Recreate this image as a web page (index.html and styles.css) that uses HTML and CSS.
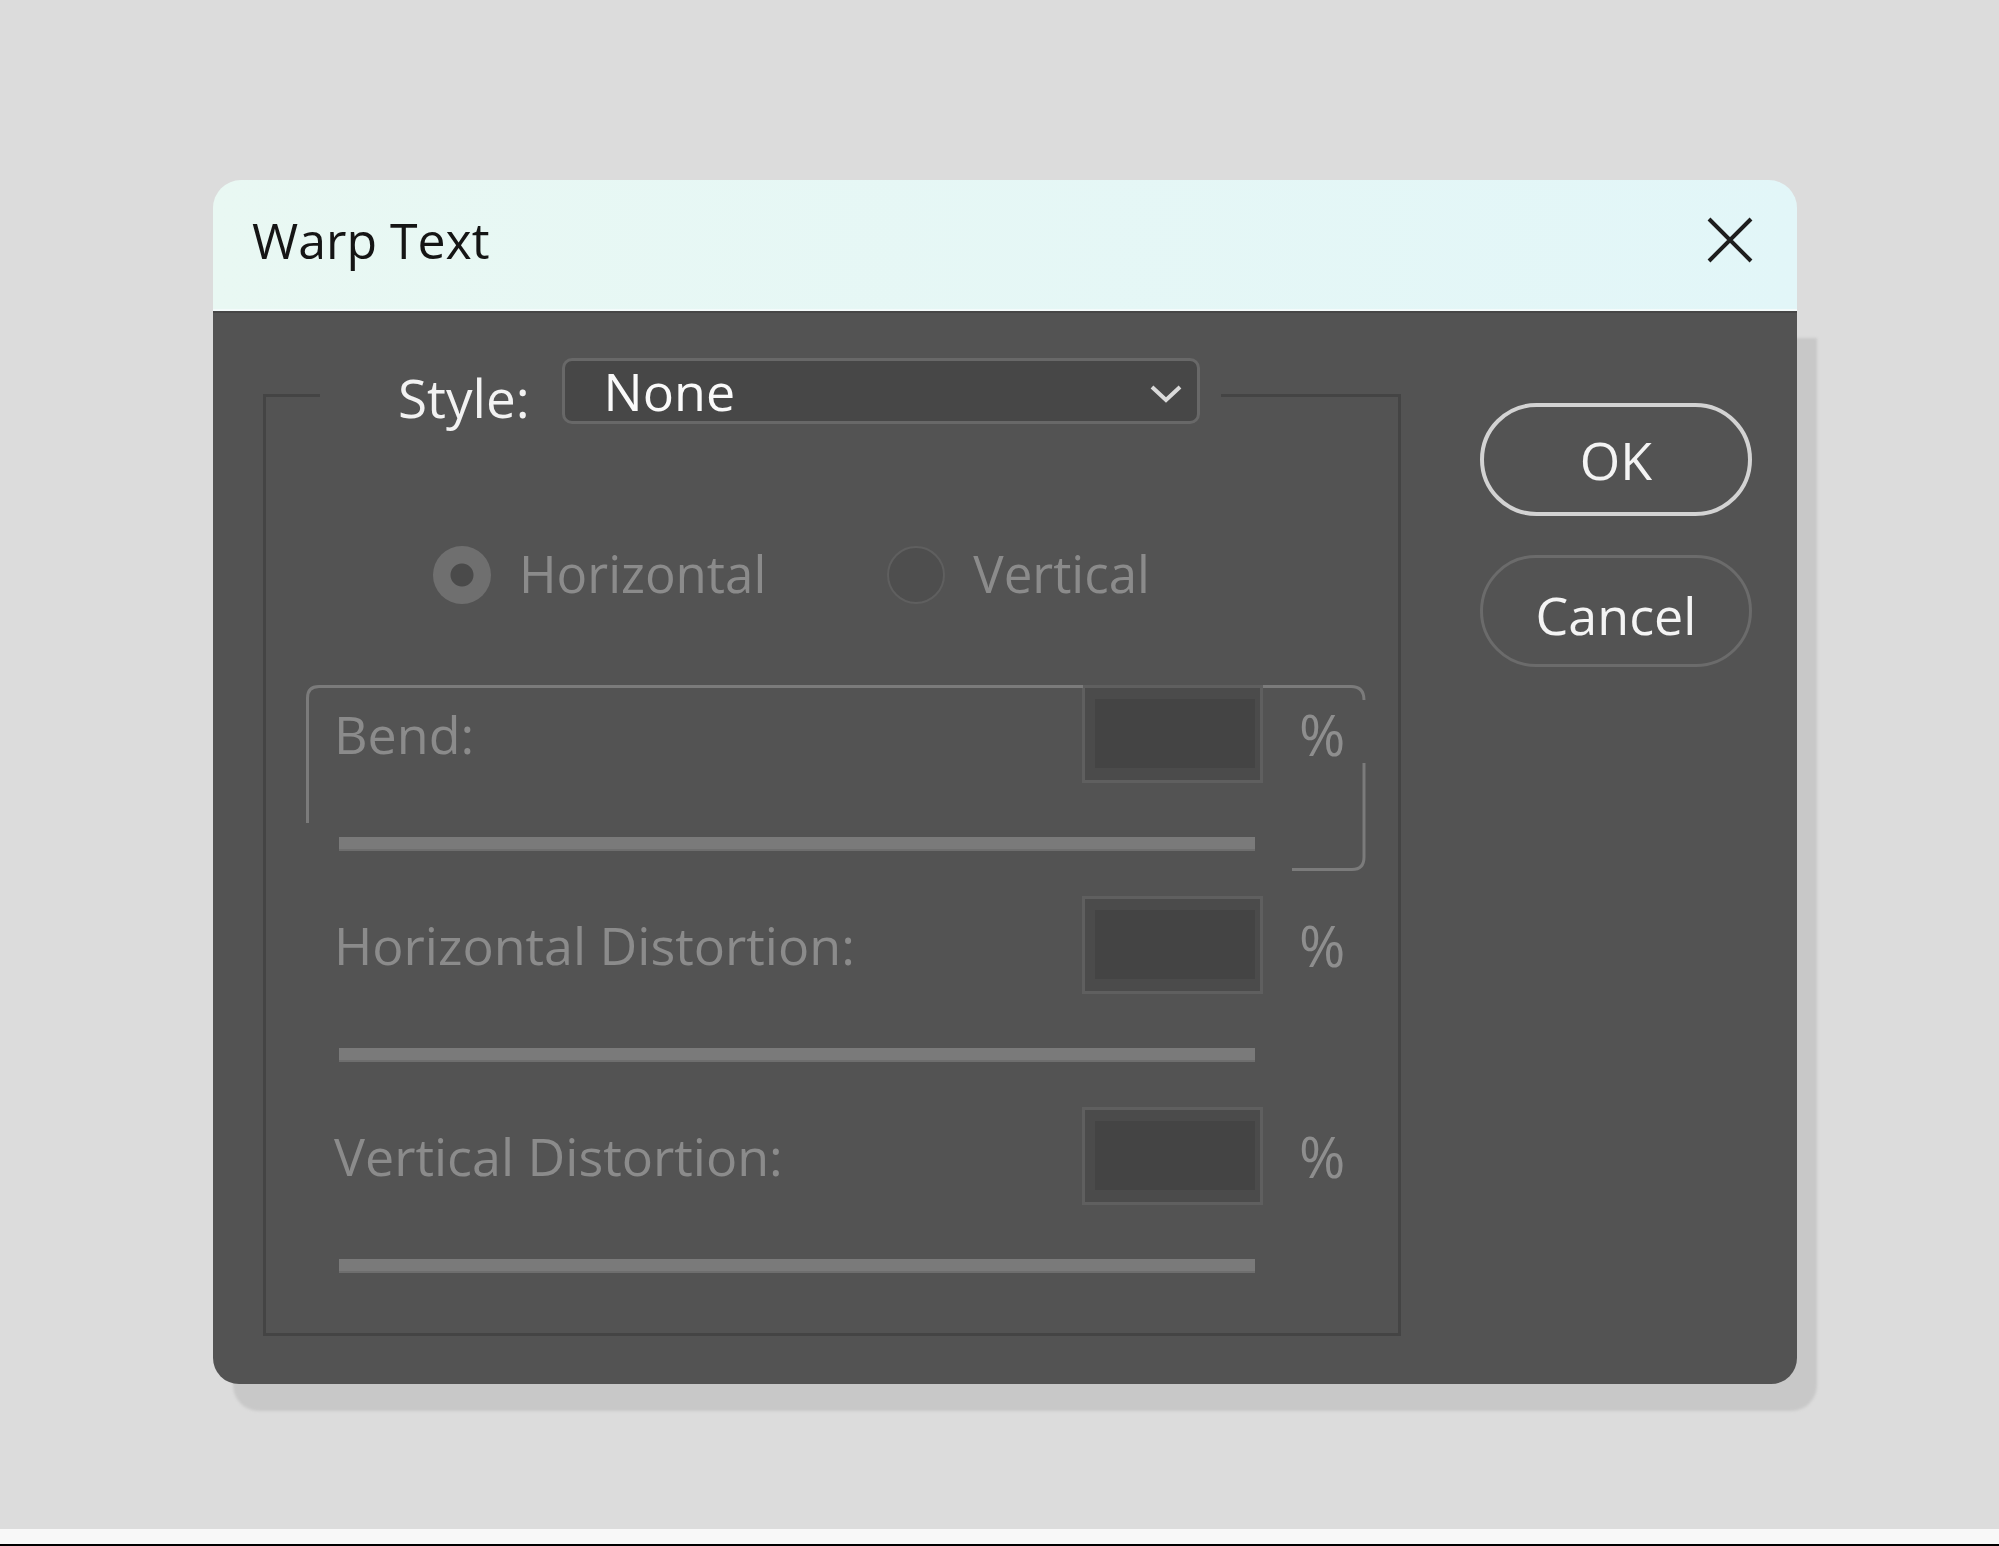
FILE: index.html
```html
<!DOCTYPE html>
<html lang="en">
<head>
<meta charset="utf-8">
<title>Warp Text</title>
<link rel="stylesheet" href="styles.css">
</head>
<body>
<div class="page">
  <div class="dialog">
    <div class="titlebar">
      <span class="title">Warp Text</span>
      <svg class="close" viewBox="0 0 46 46" aria-label="Close"><path d="M2 2 L44 44 M44 2 L2 44"/></svg>
    </div>
    <div class="panel">
      <fieldset class="group">
        <legend class="style-legend">
          <span class="style-label">Style:</span>
          <div class="select">
            <span class="select-value">None</span>
            <svg class="chevron" viewBox="0 0 34 20"><polyline points="3,3 17,16 31,3"/></svg>
          </div>
        </legend>
        <div class="orient">
          <label class="radio"><span class="dot checked"></span><span class="radio-text">Horizontal</span></label>
          <label class="radio"><span class="dot"></span><span class="radio-text">Vertical</span></label>
        </div>
        <div class="param">
          <div class="param-row"><span class="param-label">Bend:</span><span class="num"></span><span class="pct">%</span></div>
          <div class="track"></div>
          <svg class="focus-ring" viewBox="0 0 1132 190">
            <path d="M41.5 138 L41.5 13 Q41.5 1.5 53 1.5 L817 1.5"/>
            <path d="M997 1.5 L1085 1.5 Q1098 1.5 1098 15"/>
            <path d="M1098 78 L1098 172 Q1098 184.5 1086 184.5 L1026 184.5"/>
          </svg>
        </div>
        <div class="param">
          <div class="param-row"><span class="param-label">Horizontal Distortion:</span><span class="num"></span><span class="pct">%</span></div>
          <div class="track"></div>
        </div>
        <div class="param">
          <div class="param-row"><span class="param-label">Vertical Distortion:</span><span class="num"></span><span class="pct">%</span></div>
          <div class="track"></div>
        </div>
      </fieldset>
      <div class="buttons">
        <button class="btn ok">OK</button>
        <button class="btn cancel">Cancel</button>
      </div>
    </div>
  </div>
  <div class="spacer"></div>
  <div class="footer"></div>
</div>
</body>
</html>
```
FILE: styles.css
```css
html, body {
  margin: 0;
  padding: 0;
}

body {
  background: #dcdcdc;
  font-family: "Open Sans", "Noto Sans", sans-serif;
}

.page {
  height: 1546px;
  display: flex;
  flex-direction: column;
  overflow: hidden;
}

.dialog {
  margin: 180px 0 0 213px;
  width: 1584px;
}

.titlebar {
  height: 131px;
  box-sizing: border-box;
  border-radius: 28px 28px 0 0;
  background: linear-gradient(90deg, #e9f8f3, #e2f6f8);
  display: flex;
  align-items: center;
  justify-content: space-between;
  padding: 0 44px 9px 39px;
  border-bottom: 2px solid #f4fbfb;
}

.title {
  font-size: 50px;
  line-height: 68px;
  color: #151515;
}

.close {
  width: 46px;
  height: 46px;
  fill: none;
  stroke: #1e1e1e;
  stroke-width: 4;
}

.panel {
  background: #535353;
  border-top: 2px solid #464646;
  border-radius: 0 0 26px 26px;
  box-shadow: 20px 27px 3px #c8c8c8;
  display: flex;
  align-items: flex-start;
  padding: 45px 45px 48px 50px;
}

.group {
  margin: 0;
  padding: 0 0 60px 0;
  width: 1138px;
  flex: none;
  box-sizing: border-box;
  border: 3px solid #444444;
  min-inline-size: auto;
}

.style-legend {
  margin-left: 54px;
  padding: 0 21px 8px 78px;
  height: 74px;
  box-sizing: border-box;
  display: flex;
  align-items: center;
}

.style-label {
  font-size: 53px;
  line-height: 66px;
  color: #f2f2f2;
  align-self: flex-end;
  margin-bottom: -7px;
  margin-right: 32px;
}

.select {
  width: 638px;
  height: 66px;
  box-sizing: border-box;
  border: 3px solid #686868;
  border-radius: 10px;
  background: #474747;
  display: flex;
  align-items: center;
  justify-content: space-between;
  padding: 0 14px 0 39px;
}

.select-value {
  font-size: 52px;
  line-height: 60px;
  color: #fafafa;
}

.chevron {
  width: 34px;
  height: 20px;
  margin-top: 6px;
  fill: none;
  stroke: #dadada;
  stroke-width: 4;
}

.orient {
  display: flex;
  align-items: center;
  height: 60px;
  margin-top: 113px;
  padding-left: 167px;
}

.radio {
  display: flex;
  align-items: center;
  gap: 28px;
}

.radio + .radio {
  margin-left: 121px;
}

.dot {
  width: 58px;
  height: 58px;
  border-radius: 50%;
  box-sizing: border-box;
  background: #4e4e4e;
  border: 2px solid #5f5f5f;
}

.dot.checked {
  border: none;
  background: radial-gradient(circle, #4a4a4a 0 11px, #6f6f6f 12px);
}

.radio-text {
  font-size: 51px;
  line-height: 60px;
  color: #8b8b8b;
  padding-bottom: 4px;
}

.param {
  position: relative;
  margin-top: 80px;
}

.param + .param {
  margin-top: 45px;
}

.param-row {
  display: flex;
  align-items: center;
  height: 98px;
  padding: 0 47px 0 68px;
}

.param-label {
  flex: 1;
  font-size: 52px;
  line-height: 70px;
  color: #8b8b8b;
}

.num {
  width: 181px;
  height: 98px;
  box-sizing: border-box;
  border: 3px solid #5f5f5f;
  background: #444444;
  box-shadow: inset 10px 11px 0 #4b4b4b, inset -5px -12px 0 #4b4b4b;
}

.pct {
  width: 52px;
  margin-left: 36px;
  font-size: 56px;
  line-height: 70px;
  color: #8e8e8e;
}

.track {
  margin: 54px 0 0 73px;
  width: 916px;
  height: 14px;
  background: #7a7a7a;
  box-shadow: inset 0 -2px 0 #6e6e6e;
}

.focus-ring {
  position: absolute;
  left: 0;
  top: 0;
  width: 1132px;
  height: 190px;
  fill: none;
  stroke: #7b7b7b;
  stroke-width: 3;
  pointer-events: none;
}

.buttons {
  flex: none;
  width: 272px;
  margin: 45px 0 0 79px;
  display: flex;
  flex-direction: column;
  gap: 39px;
}

.btn {
  height: 113px;
  box-sizing: border-box;
  border-radius: 57px;
  background: transparent;
  font-family: inherit;
  font-size: 52px;
  color: #f4f4f4;
  padding: 0;
}

.btn.ok {
  border: 4px solid #d3d3d3;
}

.btn.cancel {
  height: 112px;
  border: 3px solid #6b6b6b;
  padding-top: 6px;
}

.spacer {
  flex: 1;
}

.footer {
  height: 15px;
  background: #f8f8f8;
  border-bottom: 2px solid #000000;
}
```
